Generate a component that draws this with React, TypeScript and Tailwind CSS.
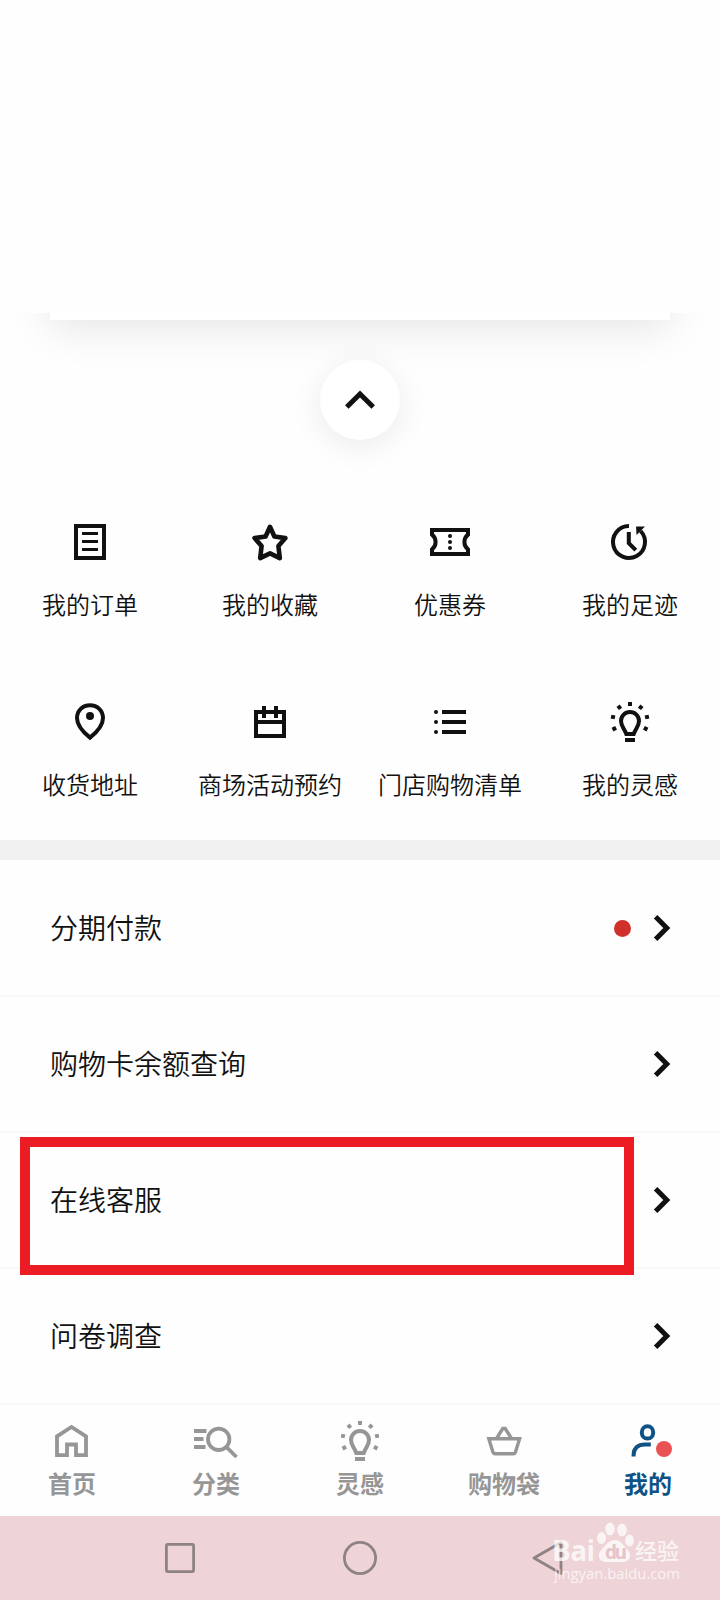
import type { ReactNode } from "react"
import clsx from "clsx"

function Icon({ children, className }: { children: ReactNode; className?: string }) {
  return (
    <svg
      viewBox="0 0 48 48"
      fill="none"
      stroke="currentColor"
      strokeWidth="4"
      className={clsx("w-12 h-12 shrink-0", className)}
    >
      {children}
    </svg>
  )
}

const OrderIcon = () => (
  <Icon>
    <rect x="10" y="8" width="28" height="32" />
    <path d="M16 15.500h16M16 23.500h16M16 31.500h16" strokeWidth="3.200" />
  </Icon>
)

const StarIcon = () => (
  <Icon>
    <path
      d="M24 8.800l4.400 9.700 11 1.600-7 8 1.400 12L24 35.400 14.200 40.100l1.400-12-7-8 11-1.600z"
      strokeWidth="4.600"
      strokeLinejoin="round"
    />
  </Icon>
)

const CouponIcon = () => (
  <Icon>
    <path d="M6 12h36v4.600a9.400 9.400 0 0 0 0 14.800V36H6v-4.600a9.400 9.400 0 0 0 0-14.800z" />
    <g fill="currentColor" stroke="none">
      <circle cx="24" cy="18" r="2" />
      <circle cx="24" cy="24" r="2" />
      <circle cx="24" cy="30" r="2" />
    </g>
  </Icon>
)

const HistoryIcon = () => (
  <Icon>
    <path d="M23 8a16 16 0 1 0 11.600 5" />
    <path d="M22.800 14v11.200l7 7" />
    <path d="M30 8.400h9L30.600 17z" fill="currentColor" stroke="none" />
  </Icon>
)

const PinIcon = () => (
  <Icon>
    <path d="M24 7.200c-7.400 0-13 5.400-13 12.800C11 28 17.400 34.400 24 39.600 30.600 34.400 37 28 37 20c0-7.400-5.600-12.800-13-12.800z" />
    <circle cx="24" cy="18" r="4" fill="currentColor" stroke="none" />
  </Icon>
)

const CalendarIcon = () => (
  <Icon>
    <rect x="10" y="14" width="28" height="24" />
    <path d="M10 24h28M18 8v12M30 8v12" />
  </Icon>
)

const ListIcon = () => (
  <Icon>
    <path d="M16 14h24M16 24h24M16 34h24" />
    <g fill="currentColor" stroke="none">
      <circle cx="10" cy="14" r="2" />
      <circle cx="10" cy="24" r="2" />
      <circle cx="10" cy="34" r="2" />
    </g>
  </Icon>
)

const BulbIcon = () => (
  <Icon>
    <path d="M24 14c-5 0-9 3.900-9 9 0 5.200 3.300 7.600 5.300 13h7.400c2-5.400 5.300-7.800 5.300-13 0-5.100-4-9-9-9z" />
    <path d="M19 42h10" />
    <g fill="currentColor" stroke="none">
      <rect x="22" y="4" width="4" height="4" />
      <rect x="11.300" y="7.300" width="4" height="4" transform="rotate(-38 13.300 9.300)" />
      <rect x="32.700" y="7.300" width="4" height="4" transform="rotate(38 34.700 9.300)" />
      <rect x="5" y="17" width="4" height="4" transform="rotate(12 7 19)" />
      <rect x="39" y="17" width="4" height="4" transform="rotate(-12 41 19)" />
      <rect x="6.300" y="28.700" width="4" height="4" transform="rotate(-28 8.300 30.700)" />
      <rect x="37.700" y="28.700" width="4" height="4" transform="rotate(28 39.700 30.700)" />
    </g>
  </Icon>
)

const HomeIcon = () => (
  <Icon>
    <path d="M9 38.200V19.400L23.500 10 38 19.400v18.800H28V27.500h-9v10.700z" strokeWidth="3.800" />
  </Icon>
)

const CategoryIcon = () => (
  <Icon>
    <circle cx="26.700" cy="22.300" r="10.700" strokeWidth="3.800" />
    <path d="M34.500 30.200l10 9.800" strokeWidth="3.800" />
    <path d="M2 14h12.500M2 22h9.500M2 30h11.500" strokeWidth="3.800" />
  </Icon>
)

const BasketIcon = () => (
  <Icon>
    <path d="M8.800 21.800h30.800l-4.200 13.400c-.3.900-1 1.500-2 1.500H15c-1 0-1.700-.6-2-1.500z" strokeWidth="3.400" />
    <path d="M16.500 21.500L22.800 11.500h2.400l6.300 10" strokeWidth="3.400" />
  </Icon>
)

const UserIcon = () => (
  <Icon>
    <ellipse cx="23.500" cy="15.400" rx="5.700" ry="6.200" />
    <path d="M9.600 39.600V38c0-7 4.800-10.600 11-10.600h6.200" />
  </Icon>
)

const shortcuts = [
  { label: "我的订单", icon: OrderIcon },
  { label: "我的收藏", icon: StarIcon },
  { label: "优惠券", icon: CouponIcon },
  { label: "我的足迹", icon: HistoryIcon },
  { label: "收货地址", icon: PinIcon },
  { label: "商场活动预约", icon: CalendarIcon },
  { label: "门店购物清单", icon: ListIcon },
  { label: "我的灵感", icon: BulbIcon },
]

const services = [
  { label: "分期付款", dot: true },
  { label: "购物卡余额查询" },
  { label: "在线客服", highlighted: true },
  { label: "问卷调查" },
]

const tabs = [
  { label: "首页", icon: HomeIcon },
  { label: "分类", icon: CategoryIcon },
  { label: "灵感", icon: BulbIcon },
  { label: "购物袋", icon: BasketIcon },
  { label: "我的", icon: UserIcon, active: true },
]

function MemberCard() {
  return (
    <section className="mt-[313px] h-[167px] overflow-hidden">
      <div className="mx-[50px] -mt-[193px] h-[200px] bg-white shadow-[0_8px_40px_rgba(0,0,0,0.1)]" />
      <button className="mx-auto mt-10 flex size-20 items-center justify-center rounded-full bg-white shadow-[0_6px_32px_rgba(0,0,0,0.08)]">
        <svg viewBox="0 0 32 32" className="size-8" fill="none" stroke="#111" strokeWidth="5">
          <path d="M2.800 23L16 10l13.200 13" />
        </svg>
      </button>
    </section>
  )
}

function ServiceRow({ label, dot, highlighted }: { label: string; dot?: boolean; highlighted?: boolean }) {
  return (
    <div className="relative flex flex-1 items-center border-b-2 border-[#f8f8f8] pl-[50px] pr-[49px]">
      <span className="grow pb-0.5 text-[28px] leading-10 font-[350]">{label}</span>
      {dot && <span className="mr-[22px] size-[17px] rounded-full bg-[#cf302c]" />}
      <svg viewBox="0 0 18 28" className="h-7 w-[18px]" fill="none" stroke="#111" strokeWidth="5">
        <path d="M2.600 2.800L13.800 14 2.600 25.200" />
      </svg>
      {highlighted && (
        <div className="absolute left-5 top-1 z-10 h-[138px] w-[614px] border-10 border-[#eb1c24]" />
      )}
    </div>
  )
}

function Watermark() {
  return (
    <div className="absolute left-[553px] top-0 h-[70px] w-[132px] font-['Open_Sans','Noto_Sans_CJK_SC',sans-serif] text-white/75">
      <svg viewBox="0 0 132 70" className="size-full" fill="currentColor">
        <text x="-1" y="45" fontSize="28" fontWeight="700" textLength="43">
          Bai
        </text>
        <ellipse cx="48.500" cy="22" rx="4.600" ry="6" />
        <ellipse cx="57" cy="13" rx="4.800" ry="6.500" />
        <ellipse cx="69" cy="14" rx="4.800" ry="6.500" />
        <ellipse cx="76.500" cy="24.500" rx="4.400" ry="6" />
        <path d="M62 24c6 0 8 5 12 9 6 6 3 13-4 13H53c-7 0-10-7-4-13 4-4 7-9 13-9z" />
        <text x="52" y="43" fontSize="19" fontWeight="700" fill="#e5c3c9" textLength="22">
          du
        </text>
        <text x="82" y="43" fontSize="22" fontWeight="500" textLength="44">
          经验
        </text>
        <text x="1" y="63" fontSize="15" textLength="126" lengthAdjust="spacingAndGlyphs">
          jingyan.baidu.com
        </text>
      </svg>
    </div>
  )
}

export default function App() {
  return (
    <div className="flex h-[1600px] w-[720px] flex-col overflow-hidden bg-[#fefefe] font-['Noto_Sans_CJK_SC',sans-serif] text-[#111]">
      <MemberCard />

      {/* Shortcuts */}
      <div className="grid h-[360px] grid-cols-4 grid-rows-2">
        {shortcuts.map((item) => (
          <div key={item.label} className="flex flex-col items-center pt-[38px]">
            <item.icon />
            <span className="mt-5 text-2xl leading-9 font-[350] whitespace-nowrap">{item.label}</span>
          </div>
        ))}
      </div>

      {/* Services */}
      <div className="h-5 bg-[#f1f1f1]" />
      <div className="flex h-[545px] flex-col pt-px">
        {services.map((item) => (
          <ServiceRow key={item.label} {...item} />
        ))}
      </div>

      {/* Bottom tabs */}
      <nav className="grid h-[111px] grid-cols-5">
        {tabs.map((tab) => (
          <div
            key={tab.label}
            className={clsx(
              "relative flex flex-col items-center pt-3",
              tab.active ? "text-[#0f5286]" : "text-[#969696]",
            )}
          >
            <tab.icon />
            <span className="text-2xl leading-9 font-bold">{tab.label}</span>
            {tab.active && (
              <span className="absolute left-20 top-9 size-4 rounded-full bg-[#e85252]" />
            )}
          </div>
        ))}
      </nav>

      {/* System navigation */}
      <div className="relative h-[84px] bg-[#eed3d7]">
        <div className="flex h-full items-center justify-between px-[156px] text-[#8f8284]">
          <Icon>
            <rect x="10.400" y="10.400" width="27.200" height="27.200" rx="1.500" strokeWidth="2.800" />
          </Icon>
          <Icon>
            <circle cx="24" cy="24" r="15.600" strokeWidth="2.800" />
          </Icon>
          <Icon>
            <path d="M18 24L45 8.500v31z" strokeWidth="2.800" strokeLinejoin="round" />
          </Icon>
        </div>
        <Watermark />
      </div>
    </div>
  )
}
